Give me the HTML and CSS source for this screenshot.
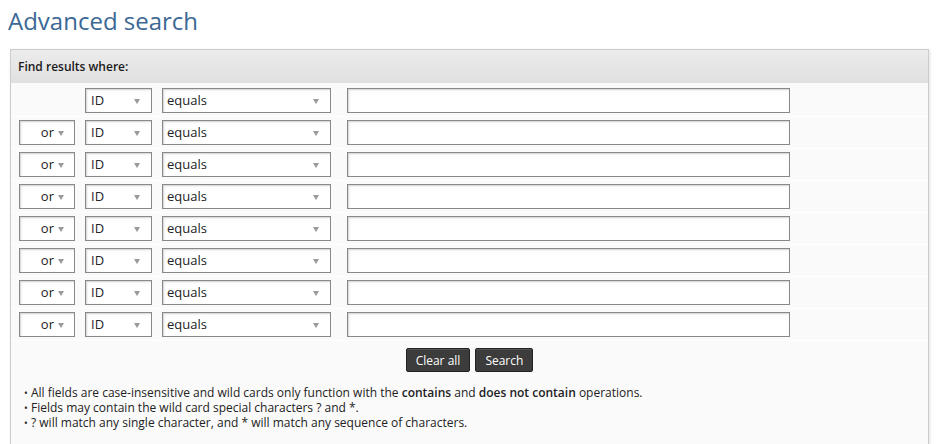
FILE: index.html
```html
<!DOCTYPE html>
<html lang="en">
<head>
    <meta charset="UTF-8">
    <title>Advanced search</title>
    <link rel="stylesheet" href="styles.css">
</head>
<body>
    <h1>Advanced search</h1>

    <div class="panel">
        <div class="panel-header">Find results where:</div>

        <div class="rows">
            <div class="row">
                <div class="select select-op empty"></div>
                <div class="select select-field">ID</div>
                <div class="select select-cond">equals</div>
                <input type="text" class="value">
            </div>
            <div class="row">
                <div class="select select-op">or</div>
                <div class="select select-field">ID</div>
                <div class="select select-cond">equals</div>
                <input type="text" class="value">
            </div>
            <div class="row">
                <div class="select select-op">or</div>
                <div class="select select-field">ID</div>
                <div class="select select-cond">equals</div>
                <input type="text" class="value">
            </div>
            <div class="row">
                <div class="select select-op">or</div>
                <div class="select select-field">ID</div>
                <div class="select select-cond">equals</div>
                <input type="text" class="value">
            </div>
            <div class="row">
                <div class="select select-op">or</div>
                <div class="select select-field">ID</div>
                <div class="select select-cond">equals</div>
                <input type="text" class="value">
            </div>
            <div class="row">
                <div class="select select-op">or</div>
                <div class="select select-field">ID</div>
                <div class="select select-cond">equals</div>
                <input type="text" class="value">
            </div>
            <div class="row">
                <div class="select select-op">or</div>
                <div class="select select-field">ID</div>
                <div class="select select-cond">equals</div>
                <input type="text" class="value">
            </div>
            <div class="row">
                <div class="select select-op">or</div>
                <div class="select select-field">ID</div>
                <div class="select select-cond">equals</div>
                <input type="text" class="value">
            </div>
        </div>

        <div class="actions">
            <button>Clear all</button>
            <button>Search</button>
        </div>

        <ul class="notes">
            <li>All fields are case-insensitive and wild cards only function with the <b>contains</b> and <b>does not contain</b> operations.</li>
            <li>Fields may contain the wild card special characters ? and *.</li>
            <li>? will match any single character, and * will match any sequence of characters.</li>
        </ul>
    </div>
</body>
</html>
```

FILE: styles.css
```css
/* page */
body {
    margin: 8px;
    font-family: "Open Sans", "Liberation Sans", sans-serif;
    font-size: 12px;
    color: #222;
    background: #fff;
}

h1 {
    margin: 0 0 15px 0;
    font-size: 24px;
    font-weight: normal;
    line-height: 26px;
    color: #3b6894;
}

/* panel */
.panel {
    margin-left: 2px;
    width: 917px;
    border: 1px solid #ccc;
    background: #fafafa;
    box-shadow: 1px 1px 3px rgba(0, 0, 0, 0.12);
}

.panel-header {
    height: 33px;
    line-height: 33px;
    padding-left: 7px;
    font-weight: 600;
    color: #1a1a1a;
    background: linear-gradient(#ececec, #e0e0e0);
}

.rows {
    padding: 2px 0 0 0;
}

.row {
    display: flex;
    align-items: center;
    height: 32px;
    padding-left: 8px;
    border-bottom: 1px solid #fff;
    box-sizing: border-box;
}

/* fake selects */
.select {
    position: relative;
    box-sizing: border-box;
    height: 25px;
    line-height: 23px;
    border: 1px solid #888;
    background: #fff;
    box-shadow: inset 1px 1px 2px rgba(0, 0, 0, 0.18);
    font-size: 13px;
    color: #222;
    margin-right: 10px;
}

.select::after {
    content: "";
    position: absolute;
    top: 10px;
    right: 11px;
    border-left: 3px solid transparent;
    border-right: 3px solid transparent;
    border-top: 5px solid #999;
}

.select-op {
    width: 56px;
    text-align: right;
    padding-right: 20px;
}

.select-op::after {
    right: 10px;
}

.select-op.empty {
    visibility: hidden;
}

.select-field {
    width: 67px;
    padding-left: 5px;
}

.select-cond {
    width: 169px;
    padding-left: 4px;
    margin-right: 16px;
}

.value {
    box-sizing: border-box;
    width: 443px;
    height: 25px;
    margin: 0;
    border: 1px solid #888;
    background: #fff;
    box-shadow: inset 1px 1px 2px rgba(0, 0, 0, 0.18);
    font-family: inherit;
}

/* buttons */
.actions {
    display: flex;
    justify-content: center;
    gap: 5px;
    padding: 7px 0 0 0;
}

.actions button {
    height: 24px;
    padding: 0 9px;
    font-family: inherit;
    font-size: 12px;
    color: #fff;
    background: #3c3c3c;
    border: 1px solid #222;
    border-radius: 2px;
    box-shadow: inset 0 1px 0 rgba(255, 255, 255, 0.12);
}

/* notes */
.notes {
    list-style: none;
    margin: 13px 0 0 0;
    padding: 0 0 14px 13px;
    font-size: 12px;
    line-height: 15px;
}

.notes li::before {
    content: "\2022";
    display: inline-block;
    width: 7px;
    font-size: 10px;
    line-height: 10px;
}

.notes b {
    font-weight: 600;
}
```
